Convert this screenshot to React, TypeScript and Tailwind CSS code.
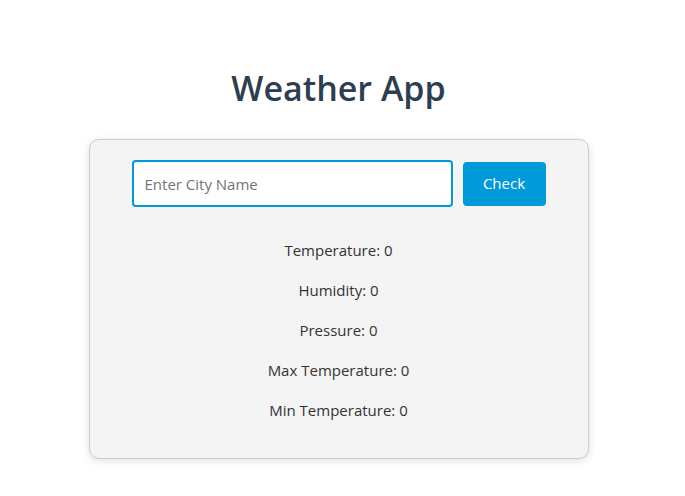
import React from "react";

export default function App() {
  const rows = [
    "Temperature: 0",
    "Humidity: 0",
    "Pressure: 0",
    "Max Temperature: 0",
    "Min Temperature: 0",
  ];
  return (
    <div
      className="min-h-[496px] w-[677px] bg-white flex flex-col items-center"
      style={{ fontFamily: '"Segoe UI", "Open Sans", sans-serif' }}
    >
      <h1 className="mt-[67px] h-[43px] text-[34px] leading-[43px] font-semibold text-[#2c3e50]">
        Weather App
      </h1>
      <div className="mt-[29px] w-[500px] rounded-[10px] border border-[#cccccc] bg-[#f4f4f4] shadow-[0_2px_8px_rgba(0,0,0,0.12)] pt-[20px] pb-[36px] flex flex-col items-center">
        <div className="flex items-center gap-[10px]">
          <input
            type="text"
            placeholder="Enter City Name"
            className="w-[321px] h-[47px] rounded-[4px] border-2 border-[#009ad8] bg-white px-[11px] text-[15px] text-[#333] placeholder:text-[#757575] outline-none"
          />
          <button className="w-[83px] h-[44px] rounded-[4px] bg-[#009ad8] text-white text-[15px]">
            Check
          </button>
        </div>
        <div className="mt-[31px] flex flex-col items-center gap-[16px]">
          {rows.map((r) => (
            <p key={r} className="text-[15px] leading-[24px] text-[#333]">
              {r}
            </p>
          ))}
        </div>
      </div>
    </div>
  );
}
